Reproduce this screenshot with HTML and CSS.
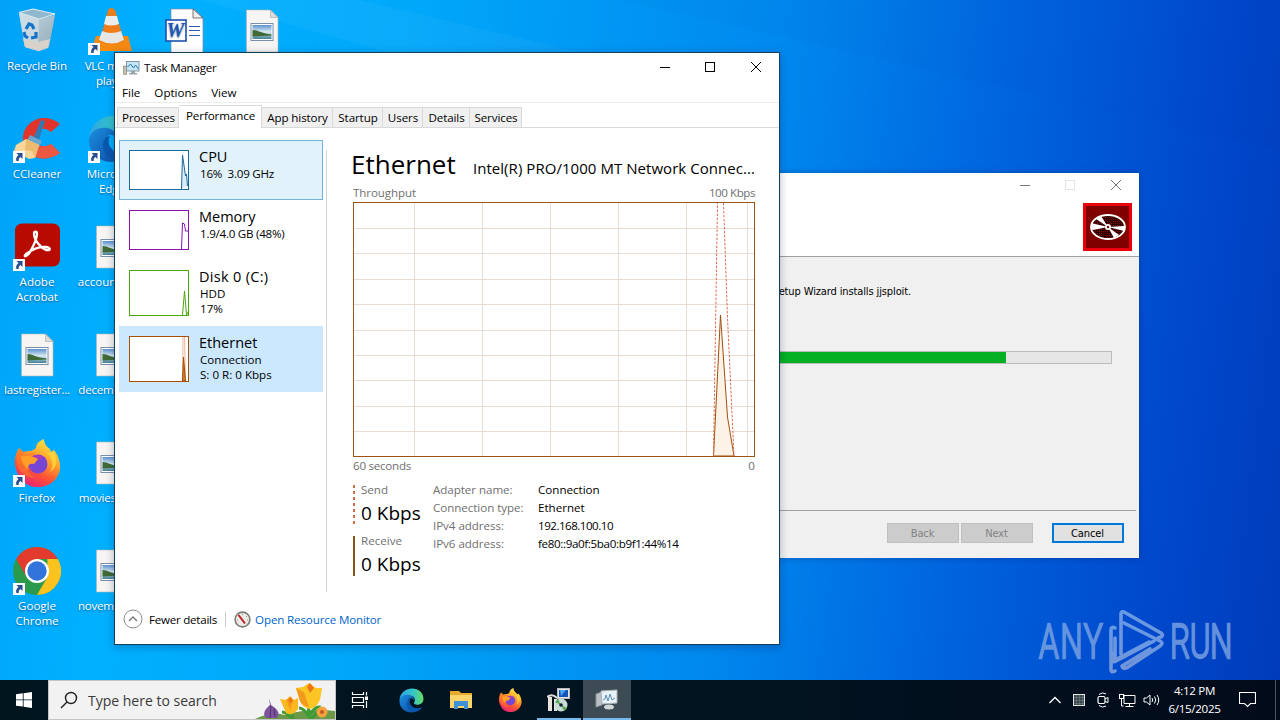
FILE: index.html
```html
<!DOCTYPE html>
<html lang="en">
<head>
    <meta charset="UTF-8">
    <meta name="viewport" content="width=device-width, initial-scale=1.0">
    <title>Desktop</title>
    <link rel="stylesheet" href="styles.css">
</head>
<body>
    <!-- shared icons -->
    <svg class="defs" width="0" height="0">
        <defs>
            <linearGradient id="photo" x1="0" y1="0" x2="0" y2="1">
                <stop offset="0" stop-color="#5b92d0"/>
                <stop offset=".5" stop-color="#dbeaf2"/>
                <stop offset="1" stop-color="#3f7f96"/>
            </linearGradient>
            <linearGradient id="fox" x1=".8" y1="0" x2=".3" y2="1">
                <stop offset="0" stop-color="#fff04a"/>
                <stop offset=".4" stop-color="#ffa02a"/>
                <stop offset=".7" stop-color="#ff5036"/>
                <stop offset="1" stop-color="#e8207a"/>
            </linearGradient>
            <linearGradient id="edge-a" x1="0" y1="0" x2="1" y2="0">
                <stop offset="0" stop-color="#2ba5e4"/>
                <stop offset=".6" stop-color="#35c6c4"/>
                <stop offset="1" stop-color="#6ade5c"/>
            </linearGradient>
            <linearGradient id="edge-b" x1="0" y1="0" x2="1" y2="1">
                <stop offset="0" stop-color="#1b8fe0"/>
                <stop offset="1" stop-color="#0c4ba0"/>
            </linearGradient>
            <linearGradient id="bin" x1="0" y1="0" x2="1" y2="1">
                <stop offset="0" stop-color="#c3d9e4"/>
                <stop offset="1" stop-color="#93a9b5"/>
            </linearGradient>
            <linearGradient id="brand-fill" x1="0" y1="0" x2="0" y2="1">
                <stop offset="0" stop-color="#7aa8ea"/>
                <stop offset="1" stop-color="#86a2dc"/>
            </linearGradient>
            <symbol id="shortcut" viewBox="0 0 12 12">
                <rect width="12" height="12" fill="#fbfbfb"/>
                <path d="M3.500 2h6v6l-2-2c-1.600 1-2 2-1.800 4H3.400C2.600 7.500 3.500 5.500 5.500 4z" fill="#2a4f8f"/>
            </symbol>
            <symbol id="picture" viewBox="0 0 48 48">
                <path d="M8.500 3h24l7.500 7.500V45H8.500z" fill="#f6f5f3" stroke="#b5b5b0" stroke-width=".6"/>
                <path d="M32.500 3v7.500H40z" fill="#dcdcda" stroke="#a5a5a0" stroke-width=".6"/>
                <rect x="13" y="16.500" width="22" height="17" fill="#fff" stroke="#7890a8"/>
                <rect x="14.500" y="18" width="19" height="14" fill="url(#photo)"/>
                <path d="M14.500 23c5 0 9 3.500 19 4.500v1l-19 1z" fill="#3f6a35"/>
            </symbol>
            <symbol id="firefox" viewBox="0 0 48 48">
                <path d="M2 26C1 20 3 14 6 9l4 4 6-1c3 0 5-1 7-3 0-4 3-7 8-9 0 5 3 8 6 10l1 3 3-2c7 9 8 20 3 27-5 8-14 11-23 10C11 46 4 38 2 26z" fill="url(#fox)"/>
                <path d="M4 25C3 18 5 15 6 9l6 6 9-1 3 5-8 4-2 8 7 8c-9-1-15-6-17-14z" fill="#ff7d26" opacity=".6"/>
                <circle cx="25" cy="25" r="9.500" fill="#7745d3"/>
                <path d="M18 18q7-4 13 0l-4 3z" fill="#a43bc0"/>
                <path d="M8 17q9-2 17 3l-4 5c-5-1-7 2-6 6-4-4-7-9-7-14z" fill="#ff9f28"/>
                <path d="M34 14c6 6 7 13 3 19 8-5 8-14 3-20z" fill="#ffd83b" opacity=".8"/>
            </symbol>
            <symbol id="edge" viewBox="0 0 48 48">
                <path d="M1 23C2 9 13 1 25 1c13 0 22 9 22 20 0 7-6 11-12 11-5 0-7-2-6-4 4-6 0-13-8-13C11 15 3 19 1 23z" fill="url(#edge-a)"/>
                <path d="M1 24c2-9 10-12 18-11 7 1 11 7 10 12-1-4-5-6-8-5-7 3-5 20 9 26C14 50 0 39 1 24z" fill="url(#edge-b)"/>
                <path d="M18 22c-7 9-1 24 13 24 6-1 11-5 14-10-8 5-18 3-22-3-3-4-3-8-1-12z" fill="#0a57ae"/>
            </symbol>
        </defs>
    </svg>

    <div class="desktop">
        <svg class="wallpaper" viewBox="0 0 1280 680">
            <path d="M0 0h620L1280 150V0z" fill="#003fae" opacity=".03"/>
            <path d="M200 0L780 160V100L360 0z" fill="#fff" opacity=".04"/>
        </svg>

        <div class="icons">
            <div class="icon-column">
                <div class="icon">
                    <svg width="48" height="48" viewBox="0 0 48 48">
                        <path d="M6 6l6 34 14 4 10-4 6-32-16 4z" fill="url(#bin)"/>
                        <path d="M6 6l20 5-1 33-13-4z" fill="#d3dfe6" opacity=".75"/>
                        <path d="M10 32l15 3 12-3-2 9-9 3-14-4z" fill="#d9d2ca"/>
                        <path d="M6 5.500L20 2l22 5-16 5z" fill="#8fb7cd" stroke="#e3edf2"/>
                        <path d="M13 22l3-5 3 1 2 4M23 25l0 5-5 1M15 31l-3-2-1-4" fill="none" stroke="#1473c8" stroke-width="3.200"/>
                    </svg>
                    <span>Recycle Bin</span>
                </div>
                <div class="icon">
                    <svg width="48" height="48" viewBox="0 0 48 48">
                        <path d="M47 9C31-4 11 6 10 22c-1 17 17 29 37 16L38 29c-8 5-16 1-16-7 0-8 9-11 16-5z" fill="#e3342b"/>
                        <path d="M14 36c8 9 22 10 33 2L38 29c-8 5-14 2-15-3z" fill="#ec5741"/>
                        <path d="M28 5l4 1-7 22-6-2z" fill="#3479b4"/>
                        <path d="M17 20l12 6-3 6-12-6z" fill="#6aa7cf"/>
                        <path d="M13 24l13 6-4 13-6 1-15-8 2-6z" fill="#f9d79b"/>
                        <path d="M13 24l13 6-4 13-3-7-7-1z" fill="#edbb70"/>
                    </svg>
                    <svg class="arrow" width="12" height="12"><use href="#shortcut"/></svg>
                    <span>CCleaner</span>
                </div>
                <div class="icon">
                    <svg width="48" height="48" viewBox="0 0 48 48">
                        <rect x="2" y="0.500" width="45" height="43" rx="7" fill="#b70b00"/>
                        <path d="M13 31c-3 3 0 4 4-2 4-7 7-14 7-18 0-3-3-3-3 0 0 6 7 14 12 16 5 1 5-2 0-3-6-1-13 2-20 7z" fill="none" stroke="#fff" stroke-width="2.300"/>
                    </svg>
                    <svg class="arrow" width="12" height="12"><use href="#shortcut"/></svg>
                    <span>Adobe<br>Acrobat</span>
                </div>
                <div class="icon">
                    <svg class="doc" width="48" height="48"><use href="#picture"/></svg>
                    <span class="long">lastregister...</span>
                </div>
                <div class="icon">
                    <svg width="48" height="48"><use href="#firefox"/></svg>
                    <svg class="arrow" width="12" height="12"><use href="#shortcut"/></svg>
                    <span>Firefox</span>
                </div>
                <div class="icon">
                    <svg width="48" height="48" viewBox="0 0 48 48">
                        <circle cx="24" cy="24" r="24" fill="#2b9a4c"/>
                        <path d="M44.800 12A24 24 0 0 1 24 48l10.400-18V12z" fill="#fcc31e"/>
                        <path d="M3.200 12A24 24 0 0 1 44.800 12H24L13.600 30z" fill="#e33b2e"/>
                        <circle cx="24" cy="24" r="12" fill="#fff"/>
                        <circle cx="24" cy="24" r="9.700" fill="#3373dc"/>
                    </svg>
                    <svg class="arrow" width="12" height="12"><use href="#shortcut"/></svg>
                    <span>Google<br>Chrome</span>
                </div>
            </div>
            <div class="icon-column">
                <div class="icon">
                    <svg width="48" height="48" viewBox="0 0 48 48">
                        <path d="M8 29h32l4 15H3z" fill="#f58a12"/>
                        <path d="M20 3q3-4 7 0l9 31q-12 7-24 0z" fill="#ef7d1a"/>
                        <path d="M18 9h11l2 8q-8 3-15 0z" fill="#ececec"/>
                        <path d="M14 24q9 4 19 0l3 9q-12 7-25 0z" fill="#e6e6e6"/>
                    </svg>
                    <svg class="arrow" width="12" height="12"><use href="#shortcut"/></svg>
                    <span class="long">VLC media<br>player</span>
                </div>
                <div class="icon">
                    <svg width="48" height="48"><use href="#edge"/></svg>
                    <svg class="arrow" width="12" height="12"><use href="#shortcut"/></svg>
                    <span>Microsoft<br>Edge</span>
                </div>
                <div class="icon">
                    <svg class="doc" width="48" height="48"><use href="#picture"/></svg>
                    <span>accounthol...</span>
                </div>
                <div class="icon">
                    <svg class="doc" width="48" height="48"><use href="#picture"/></svg>
                    <span class="long">decembera...</span>
                </div>
                <div class="icon">
                    <svg class="doc" width="48" height="48"><use href="#picture"/></svg>
                    <span class="long">moviesdesi...</span>
                </div>
                <div class="icon">
                    <svg class="doc" width="48" height="48"><use href="#picture"/></svg>
                    <span class="long">novembera...</span>
                </div>
            </div>
            <div class="icon-column">
                <div class="icon">
                    <svg width="48" height="48" viewBox="0 0 48 48">
                        <path d="M8 2h23l9 9v35H8z" fill="#fff" stroke="#7a8aa8" stroke-width=".7"/>
                        <path d="M30 2v9h10z" fill="#eee" stroke="#555" stroke-width=".8"/>
                        <path d="M26 19.500h11M26 23.500h11M26 28.500h11" stroke="#2f5fb0"/>
                        <rect x="3" y="13" width="20" height="21" fill="#fff" stroke="#1c50ad" stroke-width="1.600"/>
                        <text class="word-letter" x="12.500" y="30" text-anchor="middle">W</text>
                    </svg>
                </div>
            </div>
            <div class="icon-column">
                <div class="icon">
                    <svg class="doc" width="48" height="48"><use href="#picture"/></svg>
                </div>
            </div>
        </div>

        <!-- installer window -->
        <div class="window setup">
            <div class="setup-head">
                <div class="setup-caption">
                    <svg width="12" height="12"><path d="M2 6.500h10" stroke="#777"/></svg>
                    <svg width="12" height="12"><rect x="1.500" y="1.500" width="9" height="9" fill="none" stroke="#e4e4e4"/></svg>
                    <svg width="12" height="12"><path d="M1 1l10 10M11 1L1 11" stroke="#777"/></svg>
                </div>
                <svg class="disc" width="49" height="48" viewBox="0 0 49 48">
                    <defs>
                        <pattern id="dots" width="2" height="2" patternUnits="userSpaceOnUse">
                            <rect width="2" height="2" fill="#2c0000"/><rect width="1" height="1" fill="#8a0000"/>
                        </pattern>
                    </defs>
                    <rect width="49" height="48" fill="#e8000b"/>
                    <rect x="3" y="3" width="43" height="42" fill="#800000"/>
                    <ellipse cx="25" cy="24" rx="17" ry="12" fill="url(#dots)" stroke="#fff" stroke-width="1.800"/>
                    <path d="M25 24L8 20v4q0 2 2 3zM25 24L13 16l5-3zM25 24l16-1v5zM25 24l11 8-5 3z" fill="#fff"/>
                    <circle cx="25" cy="24" r="3" fill="#fff"/>
                    <circle cx="25" cy="24" r="1.200" fill="#800000"/>
                </svg>
            </div>
            <div class="setup-body">
                <p>Please wait while the Setup Wizard installs jjsploit.</p>
                <div class="progress"><div class="progress-fill"></div></div>
            </div>
            <div class="setup-buttons">
                <button disabled>Back</button>
                <button disabled>Next</button>
                <button class="cancel">Cancel</button>
            </div>
        </div>

        <!-- task manager window -->
        <div class="window taskmgr">
            <div class="titlebar">
                <svg width="17" height="16" viewBox="0 0 17 16">
                    <path d="M.5 6h3v8.500h-3z" fill="#c9c2a6" stroke="#8a8a7c" stroke-width=".7"/>
                    <rect x="3.500" y="1.500" width="12.500" height="9.500" fill="#c5e6f7" stroke="#8296a3"/>
                    <path d="M4.500 7l3-3 3 4 2-3 3 4" fill="none" stroke="#2476ae"/>
                    <path d="M8 11h4v2h2v1.500H6V13h2z" fill="#98a7af"/>
                </svg>
                <span class="title">Task Manager</span>
                <div class="caption">
                    <svg width="12" height="12"><path d="M2 6.500h10" stroke="#000"/></svg>
                    <svg width="12" height="12"><rect x="1.500" y="1.500" width="9" height="9" fill="none" stroke="#000"/></svg>
                    <svg width="12" height="12"><path d="M1 1l10 10M11 1L1 11" stroke="#000"/></svg>
                </div>
            </div>
            <div class="menubar">
                <span>File</span>
                <span>Options</span>
                <span>View</span>
            </div>
            <div class="tabs">
                <div class="tab t1">Processes</div>
                <div class="tab t2 active">Performance</div>
                <div class="tab t3">App history</div>
                <div class="tab t4">Startup</div>
                <div class="tab t5">Users</div>
                <div class="tab t6">Details</div>
                <div class="tab t7">Services</div>
            </div>

            <div class="content">
                <div class="sidebar">
                    <div class="item hover">
                        <svg width="60" height="40">
                            <rect x=".5" y=".5" width="59" height="39" fill="#fff" stroke="#1a6a9c"/>
                            <path d="M52.500 39L53.500 5l3 21 1-2 1 12" fill="#dcecf6" stroke="#1a6a9c"/>
                        </svg>
                        <div class="info">
                            <div class="name">CPU</div>
                            <div class="tight">16%&nbsp; 3.09 GHz</div>
                        </div>
                    </div>
                    <div class="item">
                        <svg width="60" height="40">
                            <rect x=".5" y=".5" width="59" height="39" fill="#fff" stroke="#8b12ae"/>
                            <path d="M52.500 39L53.500 13l2 1 1 7h3" fill="none" stroke="#8b12ae"/>
                        </svg>
                        <div class="info">
                            <div class="name">Memory</div>
                            <div class="tight">1.9/4.0 GB (48%)</div>
                        </div>
                    </div>
                    <div class="item tall">
                        <svg width="60" height="46">
                            <rect x=".5" y=".5" width="59" height="45" fill="#fff" stroke="#4da60c"/>
                            <path d="M53.500 45L55.500 21l2 24 2-4" fill="none" stroke="#4da60c"/>
                        </svg>
                        <div class="info">
                            <div class="name disk">Disk 0 (C:)</div>
                            <div>HDD</div>
                            <div>17%</div>
                        </div>
                    </div>
                    <div class="item tall selected">
                        <svg width="60" height="46">
                            <rect x=".5" y=".5" width="59" height="45" fill="#fff" stroke="#a74f01"/>
                            <path d="M53.500 45L54 1M55.500 1l1 44" stroke="#f0a080" stroke-width=".8"/>
                            <path d="M53.500 45L54.500 21l2 24z" fill="#d08040" stroke="#a74f01"/>
                        </svg>
                        <div class="info">
                            <div class="name">Ethernet</div>
                            <div>Connection</div>
                            <div>S: 0 R: 0 Kbps</div>
                        </div>
                    </div>
                </div>

                <div class="main">
                    <div class="heading">
                        <h1>Ethernet</h1>
                        <span class="adapter">Intel(R) PRO/1000 MT Network Connec...</span>
                    </div>
                    <div class="axis"><span class="throughput">Throughput</span><span class="scale">100 Kbps</span></div>
                    <svg class="graph" width="402" height="255" viewBox="0 0 402 255">
                        <path d="M61.500 1v253M129.500 1v253M197.500 1v253M265.500 1v253M333.500 1v253M394.500 1v253" stroke="#e8dcd3"/>
                        <path d="M1 26.500h400M1 51.500h400M1 77.500h400M1 102.500h400M1 128.500h400M1 153.500h400M1 178.500h400M1 204.500h400M1 229.500h400" stroke="#e8dcd3"/>
                        <path d="M360.500 254L367.500 113l7 102 6.500 39z" fill="#fdf2e6" stroke="#a05010"/>
                        <path d="M360.500 254L364.500 1M370.500 1l4 115 6.500 138" fill="none" stroke="#dc6a50" stroke-dasharray="2.500 1.500"/>
                        <rect x=".5" y=".5" width="401" height="254" fill="none" stroke="#9a5416"/>
                    </svg>
                    <div class="axis bottom"><span class="tight">60 seconds</span><span>0</span></div>
                    <div class="stats">
                        <div class="rates">
                            <div class="rate send"><span>Send</span><b>0 Kbps</b></div>
                            <div class="rate receive"><span>Receive</span><b>0 Kbps</b></div>
                        </div>
                        <dl class="details">
                            <dt>Adapter name:</dt><dd>Connection</dd>
                            <dt>Connection type:</dt><dd>Ethernet</dd>
                            <dt>IPv4 address:</dt><dd class="ipv4">192.168.100.10</dd>
                            <dt>IPv6 address:</dt><dd class="ipv6">fe80::9a0f:5ba0:b9f1:44%14</dd>
                        </dl>
                    </div>
                </div>
            </div>

            <div class="footer">
                <svg width="20" height="20"><circle cx="10" cy="10" r="9" fill="none" stroke="#8a8a8a"/><path d="M6 12l4-4 4 4" fill="none" stroke="#777" stroke-width="1.300"/></svg>
                <span class="fewer">Fewer details</span>
                <svg class="monitor-icon" width="17" height="17"><circle cx="8.500" cy="8.500" r="7.400" fill="#eceae6" stroke="#7b7b76" stroke-width="1.600"/><path d="M4 5l1-1M8.500 3v1M13 5l-1 1M3 9h1M14 9h-1" stroke="#999"/><path d="M4.500 4L11 12.500" stroke="#bf1d1d" stroke-width="2"/></svg>
                <a class="monitor">Open Resource Monitor</a>
            </div>
        </div>

        <svg class="watermark" width="200" height="66" viewBox="0 0 200 66">
            <g fill="#7ea5e2" stroke="#7ea5e2" stroke-width="2.400" opacity=".8">
                <text class="brand" transform="translate(4 50) scale(.63 .97)" textLength="101">ANY</text>
                <text class="brand" transform="translate(135 50) scale(.63 .97)" textLength="99">RUN</text>
            </g>
            <g fill="none" stroke="url(#brand-fill)" stroke-width="3.600" stroke-linejoin="round" stroke-linecap="round" opacity=".85">
                <path d="M81 19q-4-2-4 2v41q0 3 4 1l0-13" stroke-opacity="0"/>
                <path d="M80 20q-4-2-4 2v40V62q0 3 4 1M80 30v22l34-18"/>
                <path d="M78 45v7q0 3 3 1l38-20"/>
                <path d="M86 46V6q0-3 3-2l37 21q3 2 0 4l-3 1"/>
                <path d="M89 15l36 18q4 2 0 5L93 59q-5 3-6-1L115 41"/>
            </g>
        </svg>
    </div>

    <div class="taskbar">
        <div class="start">
            <svg width="16" height="16"><path d="M0 2.300l6.800-1v6.200H0zM7.600 1.200L16 0v7.500H7.600zM0 8.300h6.800v6.300L0 13.700zM7.600 8.300H16V16l-8.400-1.200z" fill="#fff"/></svg>
        </div>
        <div class="search">
            <svg width="18" height="18"><circle cx="11" cy="7" r="5.500" fill="none" stroke="#222" stroke-width="1.400"/><path d="M7 11l-6 6" stroke="#222" stroke-width="1.400"/></svg>
            <span>Type here to search</span>
            <svg class="flowers" width="80" height="37" viewBox="0 0 80 37">
                <path d="M0 37q16-8 30-4 22-7 50-4v8z" fill="#6a9a48"/>
                <path d="M38 37l-3-13M54 34l-1-18M54 34q5-9 10-9-2 8-9 12M36 36q-5-6-9-6M55 36q-6-10-11-10" fill="none" stroke="#3f9c35" stroke-width="3"/>
                <path d="M14 16l2 7c6 4 10 8 6 13H11c-4-4-1-9 4-13z" fill="#7d539c"/>
                <path d="M16 24l-1 12M19 26l1 9" stroke="#51306f"/>
                <path d="M25 17l6 1 4-4 4 4 4-2 0 11q-6 8-12 4z" fill="#fbb91f"/>
                <path d="M41 6l7-1 6-4 7 5 6 0-2 12q-4 8-10 9-8-1-10-9z" fill="#fcc526"/>
                <path d="M41 6l8 4 5 15q-9-2-10-9zM31 17l4 11 3-9z" fill="#f59a1b"/>
                <path d="M52 5l3-4 4 5-4 5zM33 17l3-2 2 4-3 2z" fill="#ef7412"/>
                <circle cx="67" cy="30" r="5.500" fill="#f6a340"/><circle cx="67" cy="30" r="2" fill="#c45a20"/>
            </svg>
        </div>
        <div class="task">
            <svg width="18" height="16"><path d="M1.500 0v2.500h11V0M1.500 16v-2.500h11V16M1.500 5.500h11v5h-11zM15.500 0v3.500M15.500 9v7" fill="none" stroke="#fff" stroke-width="1.200"/><rect x="14" y="4.500" width="3" height="3.500" fill="#fff"/></svg>
        </div>
        <div class="task app"><svg width="25" height="25"><use href="#edge"/></svg></div>
        <div class="task app">
            <svg width="24" height="22"><path d="M1 2h9l2 2h11v15H1z" fill="#e8a92c"/><path d="M1 6h22v13H1z" fill="#fcd46c"/><path d="M5 20v-8h14v8h-4v-3H9v3z" fill="#3c92d4"/></svg>
        </div>
        <div class="task app"><svg width="24" height="24"><use href="#firefox"/></svg></div>
        <div class="task app running">
            <svg width="24" height="24"><rect x="10.500" y=".5" width="12" height="10" fill="#e6e6e6" stroke="#bbb"/><rect x="12" y="2" width="9" height="7" fill="#1554b8"/><path d="M13 2h6l-5 6z" fill="#4aa8f0"/><path d="M1 9h4v14H1zM7 11h3v12H7z" fill="#e8e6da"/><path d="M0 9q5-4 10 1" fill="none" stroke="#ddd" stroke-width="2"/><circle cx="14" cy="17" r="6.500" fill="#c9dcd4"/><path d="M14 17L8 14l3-3zM14 17l6 3-3 3z" fill="#5aa85a"/><circle cx="14" cy="17" r="1.800" fill="#123"/></svg>
        </div>
        <div class="task app current">
            <svg width="24" height="22"><path d="M1 5l6-2v13l-6 2z" fill="#b9bfc4" stroke="#8c9499"/><path d="M6 2l16-1v13L7 15z" fill="#e8f2f8" stroke="#aab4ba"/><path d="M8 11l2-1 1-4 2 6 2-7 2 6 3-2" fill="none" stroke="#5e8fb8"/><ellipse cx="14" cy="18" rx="5" ry="2.500" fill="#d2d6d9"/></svg>
        </div>
        <div class="tray">
            <svg width="14" height="14"><path d="M1.500 10L7 4.500l5.500 5.500" fill="none" stroke="#fff" stroke-width="1.300"/></svg>
            <svg width="14" height="14"><rect x="1.500" y="1.500" width="11" height="11" fill="#39444a" stroke="#e6e6e6"/><path d="M4.500 2v10M7.500 2v10M10.500 2v10M2 4.500h10M2 7.500h10M2 10.500h10" stroke="#7f8b90" stroke-width=".5"/></svg>
            <svg width="14" height="16"><rect x="2" y="4.500" width="7" height="7" rx="1.500" fill="none" stroke="#fff" stroke-width="1.200"/><path d="M9 7l3-1.500v5L9 9.500M3 2.500Q6.500-.5 10 2M3 13.500q3.500 3 7 .5" fill="none" stroke="#fff"/></svg>
            <svg width="17" height="15"><path d="M5 2.500h11v8H5zM10.500 10.500v3M6.500 13.500h8" fill="none" stroke="#fff"/><rect x=".5" y="1.500" width="4" height="4" fill="#061019" stroke="#fff"/><path d="M2.500 6v7h2" fill="none" stroke="#fff"/></svg>
            <svg width="17" height="14"><path d="M1 5h2.500L7 2v10L3.500 9H1zM9 5q1.500 2 0 4M11.500 3.500q2.500 3.500 0 7M14 2q3.500 5 0 10" fill="none" stroke="#fff"/></svg>
        </div>
        <div class="clock">4:12 PM<br>6/15/2025</div>
        <svg class="notify" width="17" height="17"><path d="M.5 1.500h16v11h-5l-3 3-3-3h-5z" fill="none" stroke="#fff" stroke-width="1.100"/></svg>
        <div class="peek"></div>
    </div>
</body>
</html>
```
FILE: styles.css
```css
* {
    box-sizing: border-box;
}
body {
    margin: 0;
    width: 1280px;
    height: 720px;
    overflow: hidden;
    font-family: "Open Sans", "Noto Sans", sans-serif;
    font-size: 11.6px;
    line-height: 15px;
    color: #000;
}
svg {
    display: block;
    flex-shrink: 0;
}
.defs {
    position: absolute;
}
.desktop {
    position: relative;
    height: 680px;
    overflow: hidden;
    background: linear-gradient(97deg, #00a2f8 0, #00b0ff 12%, #00a8fa 30%, #0088ee 58%, #0064de 75%, #0048cc 90%, #003cba 100%);
}
.wallpaper {
    position: absolute;
    top: 0;
    left: 0;
}

/* desktop icons */
.icons {
    display: flex;
}
.icon-column {
    width: 75px;
}
.icon {
    position: relative;
    height: 108px;
    padding: 7px 1px 0 0;
    display: flex;
    flex-direction: column;
    align-items: center;
    color: #fff;
    text-align: center;
    text-shadow: 0 1px 2px rgba(0, 40, 90, .6);
    white-space: nowrap;
}
.icon span {
    margin-top: 3px;
    letter-spacing: -0.05px;
}
.icon .long {
    letter-spacing: -0.25px;
}
.icon .arrow {
    position: absolute;
    left: 13px;
    top: 43px;
}
.word-letter {
    font: italic bold 20px "Liberation Serif", serif;
    fill: #1f55b3;
}

/* windows */
.window {
    position: absolute;
    background-color: #fff;
}
.setup {
    left: 637px;
    top: 173px;
    width: 502px;
    height: 385px;
    padding-right: 3px;
    font: 11px/14px "DejaVu Sans Condensed", "DejaVu Sans", sans-serif;
    letter-spacing: -0.12px;
    background-color: #f0f0f0;
    box-shadow: 0 0 6px rgba(0, 20, 80, .35);
}
.setup-head {
    height: 84px;
    margin-right: -3px;
    background-color: #fff;
    border-bottom: 1px solid #a0a0a0;
}
.setup-caption {
    display: flex;
    justify-content: flex-end;
    gap: 34px;
    padding: 6px 17px 0 0;
}
.disc {
    margin: 12px 7px 0 auto;
}
.setup-body {
    height: 254px;
    padding: 28px 24px 0;
    border-bottom: 1px solid #a0a0a0;
}
/* the sentence ends at a fixed edge and grows to the left */
.setup-body p {
    display: flex;
    justify-content: flex-end;
    width: 250px;
    margin: 0 0 52px;
    white-space: nowrap;
}
.progress {
    height: 13px;
    border: 1px solid #bcbcbc;
    background-color: #e6e6e6;
}
.progress-fill {
    width: 344px;
    height: 11px;
    background-color: #06b025;
}
.setup-buttons {
    display: flex;
    justify-content: flex-end;
    gap: 2px;
    padding: 12px 12px 0 0;
}
.setup-buttons button {
    width: 72px;
    height: 20px;
    padding: 1px 1px 0 0;
    border: 1px solid #bfbfbf;
    background-color: #ccc;
    color: #838383;
    font: inherit;
    letter-spacing: -0.1px;
}
.setup-buttons .cancel {
    margin-left: 17px;
    border: 2px solid #0078d7;
    background-color: #e1e1e1;
    color: #000;
}

.taskmgr {
    left: 114px;
    top: 52px;
    width: 666px;
    height: 593px;
    border: 1px solid #12405c;
    box-shadow: 0 2px 8px rgba(0, 20, 60, .3);
}
.titlebar {
    display: flex;
    align-items: center;
    height: 30px;
    padding-left: 8px;
}
.title {
    margin-left: 4px;
    padding-bottom: 2px;
    letter-spacing: -0.25px;
}
.caption {
    display: flex;
    gap: 34px;
    margin-left: auto;
    padding-right: 17px;
    padding-bottom: 3px;
}
.menubar {
    display: flex;
    gap: 14px;
    height: 20px;
    padding: 2px 7px;
    border-bottom: 1px solid #ededed;
}
.tabs {
    display: flex;
    align-items: flex-end;
    height: 25px;
    padding-left: 2px;
    border-bottom: 1px solid #d9d9d9;
}
.tab {
    height: 20px;
    padding: 2px 0 0 1px;
    border: 1px solid #d9d9d9;
    border-left: none;
    border-bottom: none;
    background-color: #f0f0f0;
    text-align: center;
    white-space: nowrap;
    letter-spacing: -0.1px;
}
.tab.active {
    height: 23px;
    padding-top: 2px;
    margin-bottom: -1px;
    background-color: #fff;
}
.t1 { width: 62px; border-left: 1px solid #d9d9d9; }
.t2 { width: 83px; }
.t3 { width: 71px; }
.t4 { width: 50px; }
.t5 { width: 40px; }
.t6 { width: 47px; }
.t7 { width: 52px; }

.content {
    display: flex;
    height: 464px;
}
.sidebar {
    width: 212px;
    padding: 12px 4px 0;
    background: linear-gradient(#d4d4d4, #d4d4d4) right 22px / 1px 442px no-repeat;
}
.item {
    display: flex;
    width: 204px;
    height: 60px;
    padding: 9px;
    border: 1px solid transparent;
}
.item.tall {
    height: 66px;
}
.item.hover {
    background-color: #e2f2fb;
    border-color: #74b3dc;
}
.item.selected {
    background-color: #cce8ff;
    border-color: #cce8ff;
}
.info {
    margin: -3px 0 0 10px;
    white-space: nowrap;
    padding-left: 1px;
}
.name {
    margin: 0 0 -1px -1px;
    font-size: 14.5px;
    line-height: 20px;
}
.name.disk {
    letter-spacing: 0.3px;
}
.tight {
    letter-spacing: -0.25px;
}
.main {
    width: 404px;
    margin-left: 24px;
    padding-top: 15px;
    padding-left: 2px;
}
.heading {
    display: flex;
    align-items: baseline;
    justify-content: space-between;
    height: 42px;
    margin-left: -2px;
    white-space: nowrap;
}
h1 {
    margin: 0;
    font-size: 26px;
    font-weight: 400;
    line-height: 42px;
}
.adapter {
    font-size: 15px;
    letter-spacing: 0.05px;
}
.axis {
    display: flex;
    justify-content: space-between;
    height: 17px;
    color: #707070;
}
.throughput {
    letter-spacing: -0.1px;
}
.scale {
    letter-spacing: -0.45px;
}
.axis.bottom {
    margin-top: 1px;
    height: 24px;
}
.stats {
    display: flex;
}
.rates {
    width: 80px;
    padding-top: 3px;
}
.rate {
    height: 40px;
    margin-bottom: 11px;
    padding-left: 8px;
    color: #707070;
}
.rate.receive {
    background: linear-gradient(#8a5316, #8a5316) 0 0 / 2px 100% no-repeat;
}
.rate.send {
    background: repeating-linear-gradient(#c9704a 0 3px, #fff 3px 6px) 0 0 / 2px 100% no-repeat;
}
.rate span {
    display: block;
    line-height: 10px;
}
.rate b {
    display: block;
    font-size: 19px;
    font-weight: 400;
    line-height: 36px;
    color: #000;
}
.details {
    display: grid;
    grid-template-columns: 105px auto;
    grid-auto-rows: 18px;
    margin: 0;
    white-space: nowrap;
}
dt {
    color: #707070;
    letter-spacing: -0.05px;
}
dd {
    margin: 0;
}
.ipv4 {
    letter-spacing: -0.5px;
}
.ipv6 {
    letter-spacing: -0.35px;
}
.footer {
    display: flex;
    align-items: center;
    padding: 17px 0 0 8px;
}
.fewer {
    margin-left: 6px;
    padding-right: 8px;
    border-right: 1px solid #ccc;
    letter-spacing: -0.25px;
}
.monitor-icon {
    margin: 0 4px 0 8px;
}
.monitor {
    color: #0066cc;
    letter-spacing: -0.14px;
}

.watermark {
    position: absolute;
    left: 1035px;
    top: 608px;
}
.brand {
    font: 300 50px Roboto, sans-serif;
}

/* taskbar */
.taskbar {
    display: flex;
    height: 40px;
    color: #fff;
    background: linear-gradient(90deg, #01151f, #021320 60%, #020b1a);
}
.start,
.task {
    display: flex;
    align-items: center;
    justify-content: center;
    width: 48px;
}
.search {
    display: flex;
    align-items: center;
    width: 288px;
    padding-left: 11px;
    background-color: #f2f2f2;
    border: 1px solid #c5c5c5;
    color: #3a3a3a;
    font-size: 14px;
}
.search span {
    margin-left: 10px;
}
.flowers {
    margin: 1px 0 0 auto;
}
.task.app {
    width: 49px;
}
.task.app:nth-child(4) {
    margin-left: 3px;
}
.running {
    background: linear-gradient(#76b9ed, #76b9ed) 3px bottom / 44px 2px no-repeat;
}
.task.current {
    width: 48px;
    background-color: #3d4b55;
    box-shadow: inset 0 -2px #76b9ed;
}
.tray {
    display: flex;
    align-items: center;
    gap: 9px;
    margin-left: auto;
}
.tray svg:nth-child(2) {
    margin-left: 1px;
}
.tray svg:nth-child(3) {
    margin-left: 1px;
}
.tray svg:nth-child(5) {
    margin-left: -2px;
}
.clock {
    width: 70px;
    padding: 2px 1px 0 0;
    text-align: center;
    line-height: 18px;
    letter-spacing: -0.3px;
}
.notify {
    margin: 11px 19px 0 9px;
}
.peek {
    width: 5px;
    border-left: 1px solid #4a5660;
}
```
